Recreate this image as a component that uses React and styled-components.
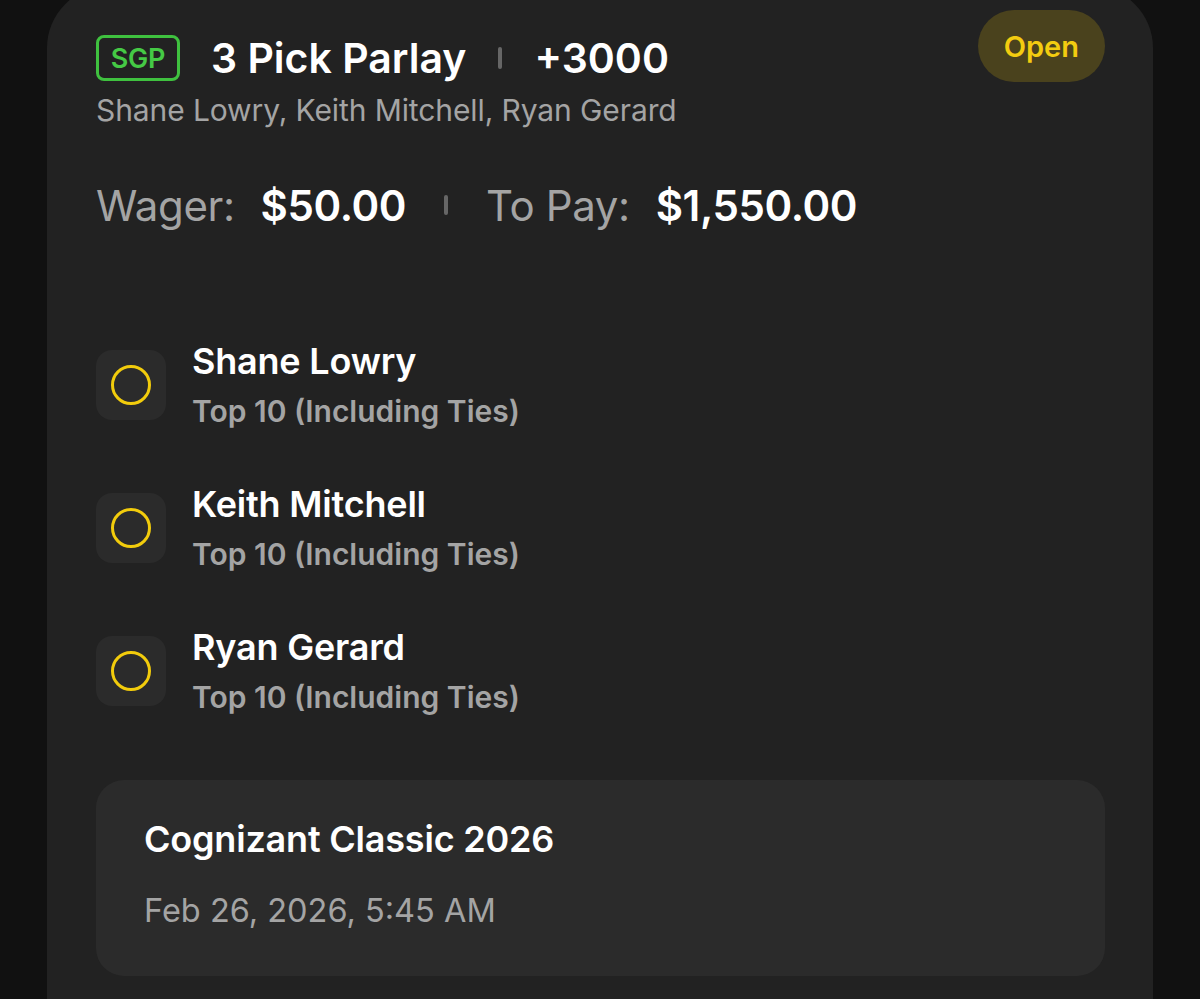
import React from "react";
import styled, { createGlobalStyle } from "styled-components";

const Global = createGlobalStyle`
  html, body { margin: 0; padding: 0; background: #111111; }
  body { font-family: Inter, "Noto Sans", sans-serif; -webkit-font-smoothing: antialiased; }
  * { box-sizing: border-box; }
`;

const Page = styled.div`
  width: 1200px;
  height: 999px;
  overflow: hidden;
  background: #111111;
  padding: 0 47px;
`;

const Card = styled.div`
  margin-top: -14px;
  height: 1100px;
  background: #222222;
  border-radius: 62px;
  padding: 24px 48px 0 49px;
  display: flex;
  flex-direction: column;
`;

const Header = styled.div`
  display: flex;
  justify-content: space-between;
  align-items: flex-start;
`;

const HeaderMain = styled.div`
  display: flex;
  flex-direction: column;
  padding-top: 25px;
`;

const TitleRow = styled.div`
  display: flex;
  align-items: center;
  height: 46px;
`;

const Badge = styled.div`
  height: 46px;
  width: 84px;
  border: 3px solid #3fc13f;
  border-radius: 8px;
  color: #45c945;
  font-size: 27px;
  font-weight: 600;
  display: flex;
  align-items: center;
  justify-content: center;
  letter-spacing: -0.3px;
`;

const Title = styled.span`
  color: #ffffff;
  font-size: 41px;
  font-weight: 600;
  letter-spacing: 0;
  margin-left: ${p => p.$ml || 0}px;
`;

const Divider = styled.span`
  display: inline-block;
  width: 4px;
  height: ${p => p.$h || 22}px;
  border-radius: 2px;
  background: #666666;
  margin: 0 ${p => p.$mx || 30}px;
`;

const Subtitle = styled.div`
  margin-top: 12px;
  color: #a4a4a4;
  font-size: 30px;
  line-height: 34px;
  font-weight: 400;
  letter-spacing: -0.1px;
`;

const StatusPill = styled.div`
  height: 72px;
  padding: 0 26px;
  border-radius: 36px;
  background: #4a421d;
  color: #f3cc10;
  font-size: 29px;
  font-weight: 600;
  display: flex;
  align-items: center;
`;

const Amounts = styled.div`
  display: flex;
  align-items: center;
  margin-top: 53px;
  height: 50px;
`;

const AmountLabel = styled.span`
  color: #a4a4a4;
  font-size: 42px;
  font-weight: 400;
  letter-spacing: -0.4px;
  margin-right: 26px;
`;

const AmountValue = styled.span`
  color: #ffffff;
  font-size: 42px;
  font-weight: 600;
  letter-spacing: -0.4px;
`;

const Picks = styled.div`
  display: flex;
  flex-direction: column;
  gap: 51px;
  margin-top: 109px;
`;

const PickRow = styled.div`
  display: flex;
  align-items: center;
  height: 92px;
`;

const StatusBox = styled.div`
  width: 70px;
  height: 70px;
  border-radius: 16px;
  background: #2b2b2b;
  display: flex;
  align-items: center;
  justify-content: center;
  flex-shrink: 0;
`;

const Ring = styled.div`
  width: 40px;
  height: 40px;
  border-radius: 50%;
  border: 3px solid #f2cc0c;
`;

const PickText = styled.div`
  display: flex;
  flex-direction: column;
  margin-left: 26px;
  gap: 8px;
`;

const PickName = styled.div`
  color: #ffffff;
  font-size: 36px;
  line-height: 44px;
  font-weight: 600;
  letter-spacing: -0.2px;
`;

const PickMarket = styled.div`
  color: #a4a4a4;
  font-size: 30px;
  line-height: 40px;
  font-weight: 600;
  letter-spacing: 0;
`;

const EventBox = styled.div`
  margin-top: 63px;
  height: 196px;
  border-radius: 28px;
  background: #2b2b2b;
  padding: 37px 48px 0 48px;
  display: flex;
  flex-direction: column;
`;

const EventName = styled.div`
  color: #ffffff;
  font-size: 36px;
  line-height: 44px;
  font-weight: 600;
  letter-spacing: -0.2px;
`;

const EventDate = styled.div`
  margin-top: 30px;
  color: #a4a4a4;
  font-size: 32.5px;
  line-height: 40px;
  font-weight: 400;
  letter-spacing: 0;
`;

const picks = [
  { name: "Shane Lowry", market: "Top 10 (Including Ties)" },
  { name: "Keith Mitchell", market: "Top 10 (Including Ties)" },
  { name: "Ryan Gerard", market: "Top 10 (Including Ties)" },
];

export default function App() {
  return (
    <Page>
      <Global />
      <Card>
        <Header>
          <HeaderMain>
            <TitleRow>
              <Badge>SGP</Badge>
              <Title $ml={31}>3 Pick Parlay</Title>
              <Divider $h={22} $mx={32} />
              <Title>+3000</Title>
            </TitleRow>
            <Subtitle>Shane Lowry, Keith Mitchell, Ryan Gerard</Subtitle>
          </HeaderMain>
          <StatusPill>Open</StatusPill>
        </Header>

        <Amounts>
          <AmountLabel>Wager:</AmountLabel>
          <AmountValue>$50.00</AmountValue>
          <Divider $h={20} $mx={38} />
          <AmountLabel>To Pay:</AmountLabel>
          <AmountValue>$1,550.00</AmountValue>
        </Amounts>

        <Picks>
          {picks.map((p) => (
            <PickRow key={p.name}>
              <StatusBox>
                <Ring />
              </StatusBox>
              <PickText>
                <PickName>{p.name}</PickName>
                <PickMarket>{p.market}</PickMarket>
              </PickText>
            </PickRow>
          ))}
        </Picks>

        <EventBox>
          <EventName>Cognizant Classic 2026</EventName>
          <EventDate>Feb 26, 2026, 5:45 AM</EventDate>
        </EventBox>
      </Card>
    </Page>
  );
}
